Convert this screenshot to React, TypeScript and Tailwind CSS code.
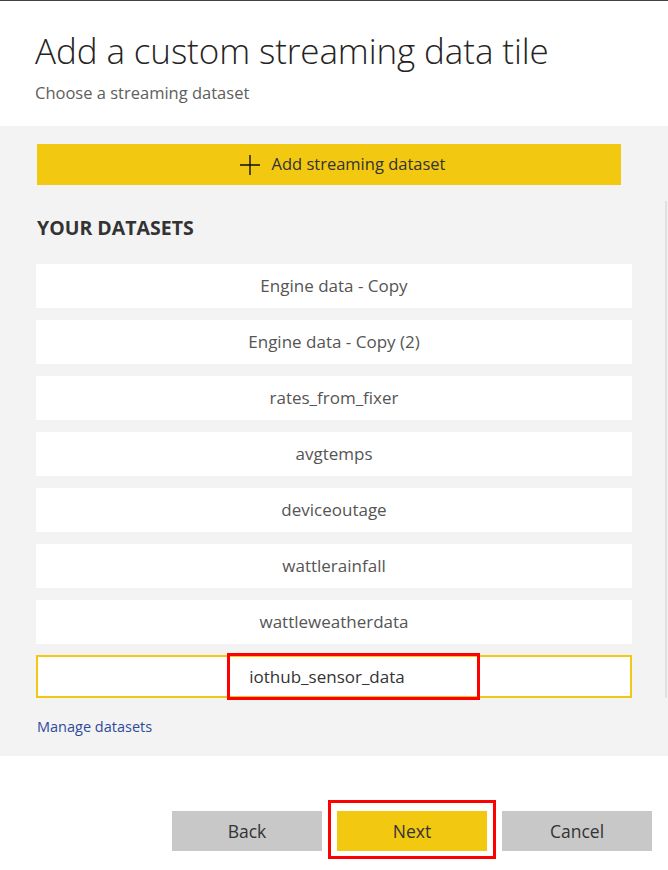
const datasets = [
  "Engine data - Copy",
  "Engine data - Copy (2)",
  "rates_from_fixer",
  "avgtemps",
  "deviceoutage",
  "wattlerainfall",
  "wattleweatherdata",
];

export default function App() {
  return (
    <div className="w-[668px] h-[870px] bg-white border-t border-[#444] font-['Open_Sans',sans-serif] text-[#333] overflow-hidden">
      {/* Header */}
      <div className="px-[35px] pt-[28px] pb-[22px]">
        <h1 className="text-[35px] font-light leading-[44px] text-[#252423] tracking-[-0.1px]">
          Add a custom streaming data tile
        </h1>
        <p className="mt-[9px] text-[16.5px] leading-[22px] text-[#605e5c]">Choose a streaming dataset</p>
      </div>

      {/* Gray panel */}
      <div className="bg-[#f3f3f3] h-[630px]">
        <div className="pt-[18px] px-[37px]">
          <button className="w-[584px] h-[41px] bg-[#f2c811] flex items-center justify-center gap-[10px] pl-[26px] text-[16.5px] text-[#333]">
            <svg width="22" height="22" viewBox="0 0 22 22" className="mr-[1px]">
              <path d="M11 1v20M1 11h20" stroke="#111" strokeWidth="1.4" fill="none" />
            </svg>
            <span>Add streaming dataset</span>
          </button>
        </div>

        {/* Scrollable list */}
        <div className="mt-[16px] ml-[2px] mr-[1px] h-[497px] border-r-2 border-[#e0e0e0] pl-[34px] pr-[33px]">
          <div className="pt-[14px] text-[19.5px] font-bold leading-[26px] text-[#333] pl-[1px]">YOUR DATASETS</div>
          <div className="mt-[23px] flex flex-col gap-[12px]">
            {datasets.map((d) => (
              <div
                key={d}
                className="h-[44px] bg-white flex items-center justify-center text-[17px] text-[#555]"
              >
                {d}
              </div>
            ))}
            <div className="relative h-[43px] -mt-[1px] bg-white border-2 border-[#f2c811] flex items-center justify-center text-[17px] text-[#333]">
              <span className="pr-[14px]">iothub_sensor_data</span>
              <div className="absolute left-[189px] top-[-4px] w-[253px] h-[47px] border-[3px] border-[#ff0000]" />
            </div>
          </div>
        </div>

        <div className="pl-[37px] pt-[18px] text-[14.5px] text-[#2f4a9b]">Manage datasets</div>
      </div>

      {/* Footer buttons */}
      <div className="flex justify-end gap-[15px] pr-[16px] pt-[55px]">
        <button className="w-[150px] h-[40px] bg-[#c8c8c8] text-[17.5px] text-[#333]">Back</button>
        <div className="relative">
          <button className="w-[150px] h-[40px] bg-[#f2c811] text-[17.5px] text-[#333]">Next</button>
          <div className="absolute left-[-9px] top-[-11px] w-[168px] h-[59px] border-[3px] border-[#ff0000]" />
        </div>
        <button className="w-[150px] h-[40px] bg-[#c8c8c8] text-[17.5px] text-[#333]">Cancel</button>
      </div>
    </div>
  );
}
